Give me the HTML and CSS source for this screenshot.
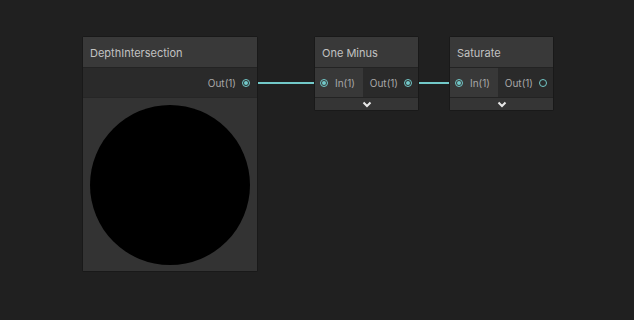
FILE: index.html
```html
<!DOCTYPE html>
<html>
<head>
<title>Shader Graph</title>
<link rel="stylesheet" href="styles.css">
<meta charset="utf-8">
</head>
<body>
<div class="canvas">

<svg class="edges" width="634" height="320">
<line x1="250" y1="83" x2="320" y2="83" />
<line x1="412" y1="83" x2="455" y2="83" />
</svg>

<div class="node node-depth">
<div class="node-title">DepthIntersection</div>
<div class="ports">
<div class="outputs wide">
<span class="label">Out(1)</span>
<span class="port connected"></span>
</div>
</div>
<div class="preview">
<div class="disc"></div>
</div>
</div>

<div class="node node-minus">
<div class="node-title">One Minus</div>
<div class="ports">
<div class="inputs">
<span class="port connected"></span>
<span class="label">In(1)</span>
</div>
<div class="outputs">
<span class="label">Out(1)</span>
<span class="port connected"></span>
</div>
</div>
<div class="collapse">
<svg width="10" height="7" viewBox="0 0 10 7"><path d="M1.5 1.5 L5 5 L8.5 1.5" /></svg>
</div>
</div>

<div class="node node-saturate">
<div class="node-title">Saturate</div>
<div class="ports">
<div class="inputs">
<span class="port connected"></span>
<span class="label">In(1)</span>
</div>
<div class="outputs">
<span class="label">Out(1)</span>
<span class="port"></span>
</div>
</div>
<div class="collapse">
<svg width="10" height="7" viewBox="0 0 10 7"><path d="M1.5 1.5 L5 5 L8.5 1.5" /></svg>
</div>
</div>

</div>
</body>
</html>
```

FILE: styles.css
```css
*
{
padding:0;
margin:0;
box-sizing:border-box;
}

body
{
background-color:#202020;
font-family:"Inter","Liberation Sans",sans-serif;
}

.canvas
{
position:relative;
width:634px;
height:320px;
overflow:hidden;
}

.edges
{
position:absolute;
left:0;
top:0;
}

.edges line
{
stroke:#72c9c9;
stroke-width:2;
}

/* nodes sit on the graph canvas at their own place */
.node
{
position:absolute;
top:36px;
display:flex;
flex-direction:column;
border:1px solid #191919;
border-radius:2px;
background-color:#2a2a2a;
}

.node-depth
{
left:82px;
width:176px;
}

.node-minus
{
left:314px;
width:105px;
}

.node-saturate
{
left:449px;
width:105px;
}

.node-title
{
height:31px;
display:flex;
align-items:center;
padding-left:7px;
padding-top:1px;
background-color:#393939;
border-bottom:1px solid #232323;
color:#c2c2c2;
font-size:11px;
}

.ports
{
display:flex;
height:29px;
}

.inputs
{
width:48px;
display:flex;
align-items:center;
padding-left:5px;
gap:7px;
background-color:#383838;
}

.outputs
{
flex:1;
display:flex;
align-items:center;
justify-content:flex-end;
padding-right:6px;
gap:6px;
background-color:#2a2a2a;
}

.outputs.wide
{
padding-right:7px;
gap:6px;
}

.label
{
color:#a8a8a8;
font-size:10px;
padding-top:1px;
}

.port
{
width:8px;
height:8px;
border-radius:50%;
border:1px solid #72c9c9;
position:relative;
}

.port.connected:after
{
content:"";
position:absolute;
left:1px;
top:1px;
width:4px;
height:4px;
border-radius:50%;
background-color:#72c9c9;
}

.preview
{
height:174px;
display:flex;
justify-content:center;
align-items:center;
background-color:#333333;
border-top:1px solid #262626;
}

.disc
{
width:160px;
height:160px;
border-radius:50%;
background-color:#000;
}

.collapse
{
height:13px;
display:flex;
justify-content:center;
align-items:center;
background-color:#353535;
border-top:1px solid #232323;
}

.collapse path
{
fill:none;
stroke:#e8e8e8;
stroke-width:2;
}
```
